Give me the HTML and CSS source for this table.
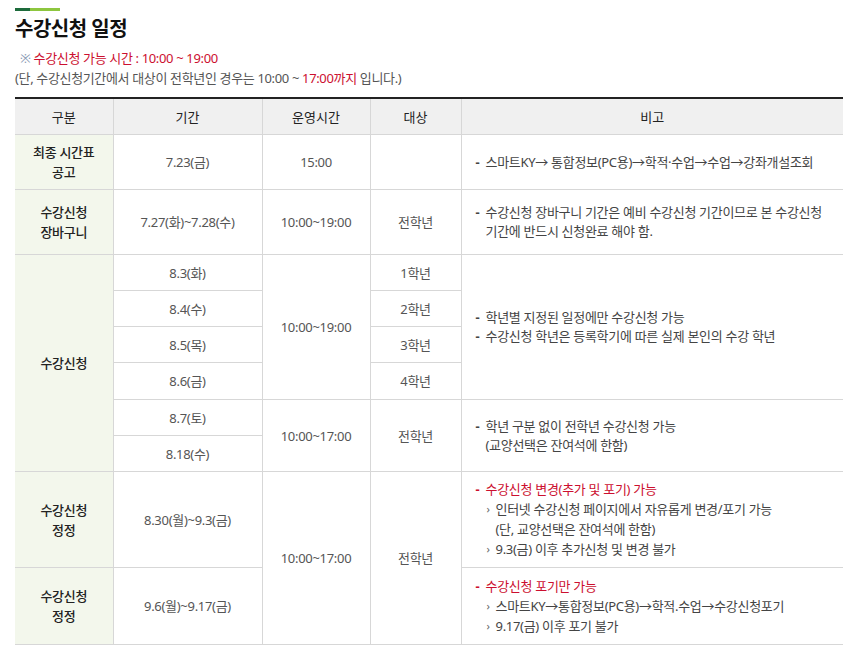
FILE: index.html
```html
<!DOCTYPE html>
<html lang="ko">
<head>
<meta charset="utf-8">
<link rel="stylesheet" href="styles.css">
</head>
<body>
<div class="page">
  <div class="title-bar"><span class="bar-dark"></span><span class="bar-light"></span></div>
  <h1 class="title">수강신청 일정</h1>
  <div class="notes">
    <p class="note-line"><span class="mark">※</span> <span class="red">수강신청 가능 시간 : 10:00 ~ 19:00</span></p>
    <p class="note-line">(단, 수강신청기간에서 대상이 전학년인 경우는 10:00 ~ <span class="red">17:00까지</span> 입니다.)</p>
  </div>
  <table class="schedule">
    <colgroup>
      <col class="c1"><col class="c2"><col class="c3"><col class="c4"><col class="c5">
    </colgroup>
    <thead>
      <tr><th>구분</th><th>기간</th><th>운영시간</th><th>대상</th><th>비고</th></tr>
    </thead>
    <tbody>
      <tr class="h55">
        <td class="cat">최종 시간표<br>공고</td>
        <td>7.23(금)</td>
        <td>15:00</td>
        <td></td>
        <td class="rmk"><p class="dash">스마트KY→ 통합정보(PC용)→학적·수업→수업→강좌개설조회</p></td>
      </tr>
      <tr class="h65">
        <td class="cat">수강신청<br>장바구니</td>
        <td>7.27(화)~7.28(수)</td>
        <td>10:00~19:00</td>
        <td>전학년</td>
        <td class="rmk"><p class="dash">수강신청 장바구니 기간은 예비 수강신청 기간이므로 본 수강신청<br>기간에 반드시 신청완료 해야 함.</p></td>
      </tr>
      <tr class="h36">
        <td class="cat" rowspan="6">수강신청</td>
        <td>8.3(화)</td>
        <td rowspan="4">10:00~19:00</td>
        <td>1학년</td>
        <td class="rmk" rowspan="4"><p class="dash">학년별 지정된 일정에만 수강신청 가능</p><p class="dash">수강신청 학년은 등록학기에 따른 실제 본인의 수강 학년</p></td>
      </tr>
      <tr class="h36"><td>8.4(수)</td><td>2학년</td></tr>
      <tr class="h36"><td>8.5(목)</td><td>3학년</td></tr>
      <tr class="h37"><td>8.6(금)</td><td>4학년</td></tr>
      <tr class="h36">
        <td>8.7(토)</td>
        <td rowspan="2">10:00~17:00</td>
        <td rowspan="2">전학년</td>
        <td class="rmk" rowspan="2"><p class="dash">학년 구분 없이 전학년 수강신청 가능<br>(교양선택은 잔여석에 한함)</p></td>
      </tr>
      <tr class="h36"><td>8.18(수)</td></tr>
      <tr class="h96">
        <td class="cat">수강신청<br>정정</td>
        <td>8.30(월)~9.3(금)</td>
        <td rowspan="2">10:00~17:00</td>
        <td rowspan="2">전학년</td>
        <td class="rmk">
          <p class="dash red">수강신청 변경(추가 및 포기) 가능</p>
          <p class="sub">인터넷 수강신청 페이지에서 자유롭게 변경/포기 가능<br>(단, 교양선택은 잔여석에 한함)</p>
          <p class="sub">9.3(금) 이후 추가신청 및 변경 불가</p>
        </td>
      </tr>
      <tr class="h77">
        <td class="cat">수강신청<br>정정</td>
        <td>9.6(월)~9.17(금)</td>
        <td class="rmk">
          <p class="dash red">수강신청 포기만 가능</p>
          <p class="sub">스마트KY→통합정보(PC용)→학적.수업→수강신청포기</p>
          <p class="sub">9.17(금) 이후 포기 불가</p>
        </td>
      </tr>
    </tbody>
  </table>
</div>
</body>
</html>
```

FILE: styles.css
```css
html, body {
  margin: 0;
  padding: 0;
  background: #fff;
}
body {
  font-family: "Noto Sans", "Noto Sans CJK KR", sans-serif;
  color: #444;
  font-size: 13px;
}
.page {
  padding: 8px 18px 0 15px;
}
.title-bar {
  display: flex;
  height: 3px;
}
.bar-dark {
  width: 15px;
  background: #1d6b3b;
}
.bar-light {
  width: 30px;
  background: #8dc63f;
}
.title {
  margin: 3px 0 0 0;
  font-size: 20px;
  line-height: 30px;
  font-weight: bold;
  color: #111;
  letter-spacing: -0.5px;
}
.notes {
  margin-top: 4px;
  margin-bottom: 9px;
}
.note-line {
  margin: 0;
  font-size: 13px;
  line-height: 20px;
  color: #555;
  letter-spacing: -0.35px;
}
.mark {
  color: #8a9bb5;
  margin-left: 5px;
}
.red {
  color: #cc0f2f;
}
.schedule {
  width: 828px;
  border-collapse: collapse;
  table-layout: fixed;
  border-top: 2px solid #222;
}
.c1 { width: 98px; }
.c2 { width: 149px; }
.c3 { width: 108px; }
.c4 { width: 91px; }
.c5 { width: 382px; }
.schedule th {
  background: #f0f0f0;
  height: 35px;
  font-weight: normal;
  color: #222;
  font-size: 13px;
  border: 1px solid #d7d7d7;
  border-top: 0;
  padding: 0;
}
.schedule td {
  border: 1px solid #d7d7d7;
  text-align: center;
  vertical-align: middle;
  padding: 0;
  line-height: 20px;
  color: #555;
  letter-spacing: -0.3px;
}
.schedule th:first-child, .schedule td.cat {
  border-left: 0;
}
.schedule th:last-child, .schedule td.rmk {
  border-right: 0;
}
.schedule td.cat {
  background: #f3f7ec;
  color: #222;
  font-weight: 500;
}
.schedule td.rmk {
  text-align: left;
  padding-left: 14px;
  color: #444;
}
.h55 { height: 55px; }
.h65 { height: 65px; }
.h36 { height: 36px; }
.h37 { height: 37px; }
.h96 { height: 96px; }
.h77 { height: 77px; }
.dash {
  margin: 0;
  position: relative;
  padding-left: 10px;
  line-height: 19px;
}
.dash::before {
  content: "-";
  position: absolute;
  left: 0;
  top: 0;
  font-weight: bold;
}
.rmk .dash.red {
  color: #cc0f2f;
}
.sub {
  margin: 0;
  position: relative;
  padding-left: 20px;
  line-height: 20px;
}
.sub::before {
  content: "›";
  position: absolute;
  left: 11px;
  top: 0;
  font-size: 11px;
  color: #666;
}
```
